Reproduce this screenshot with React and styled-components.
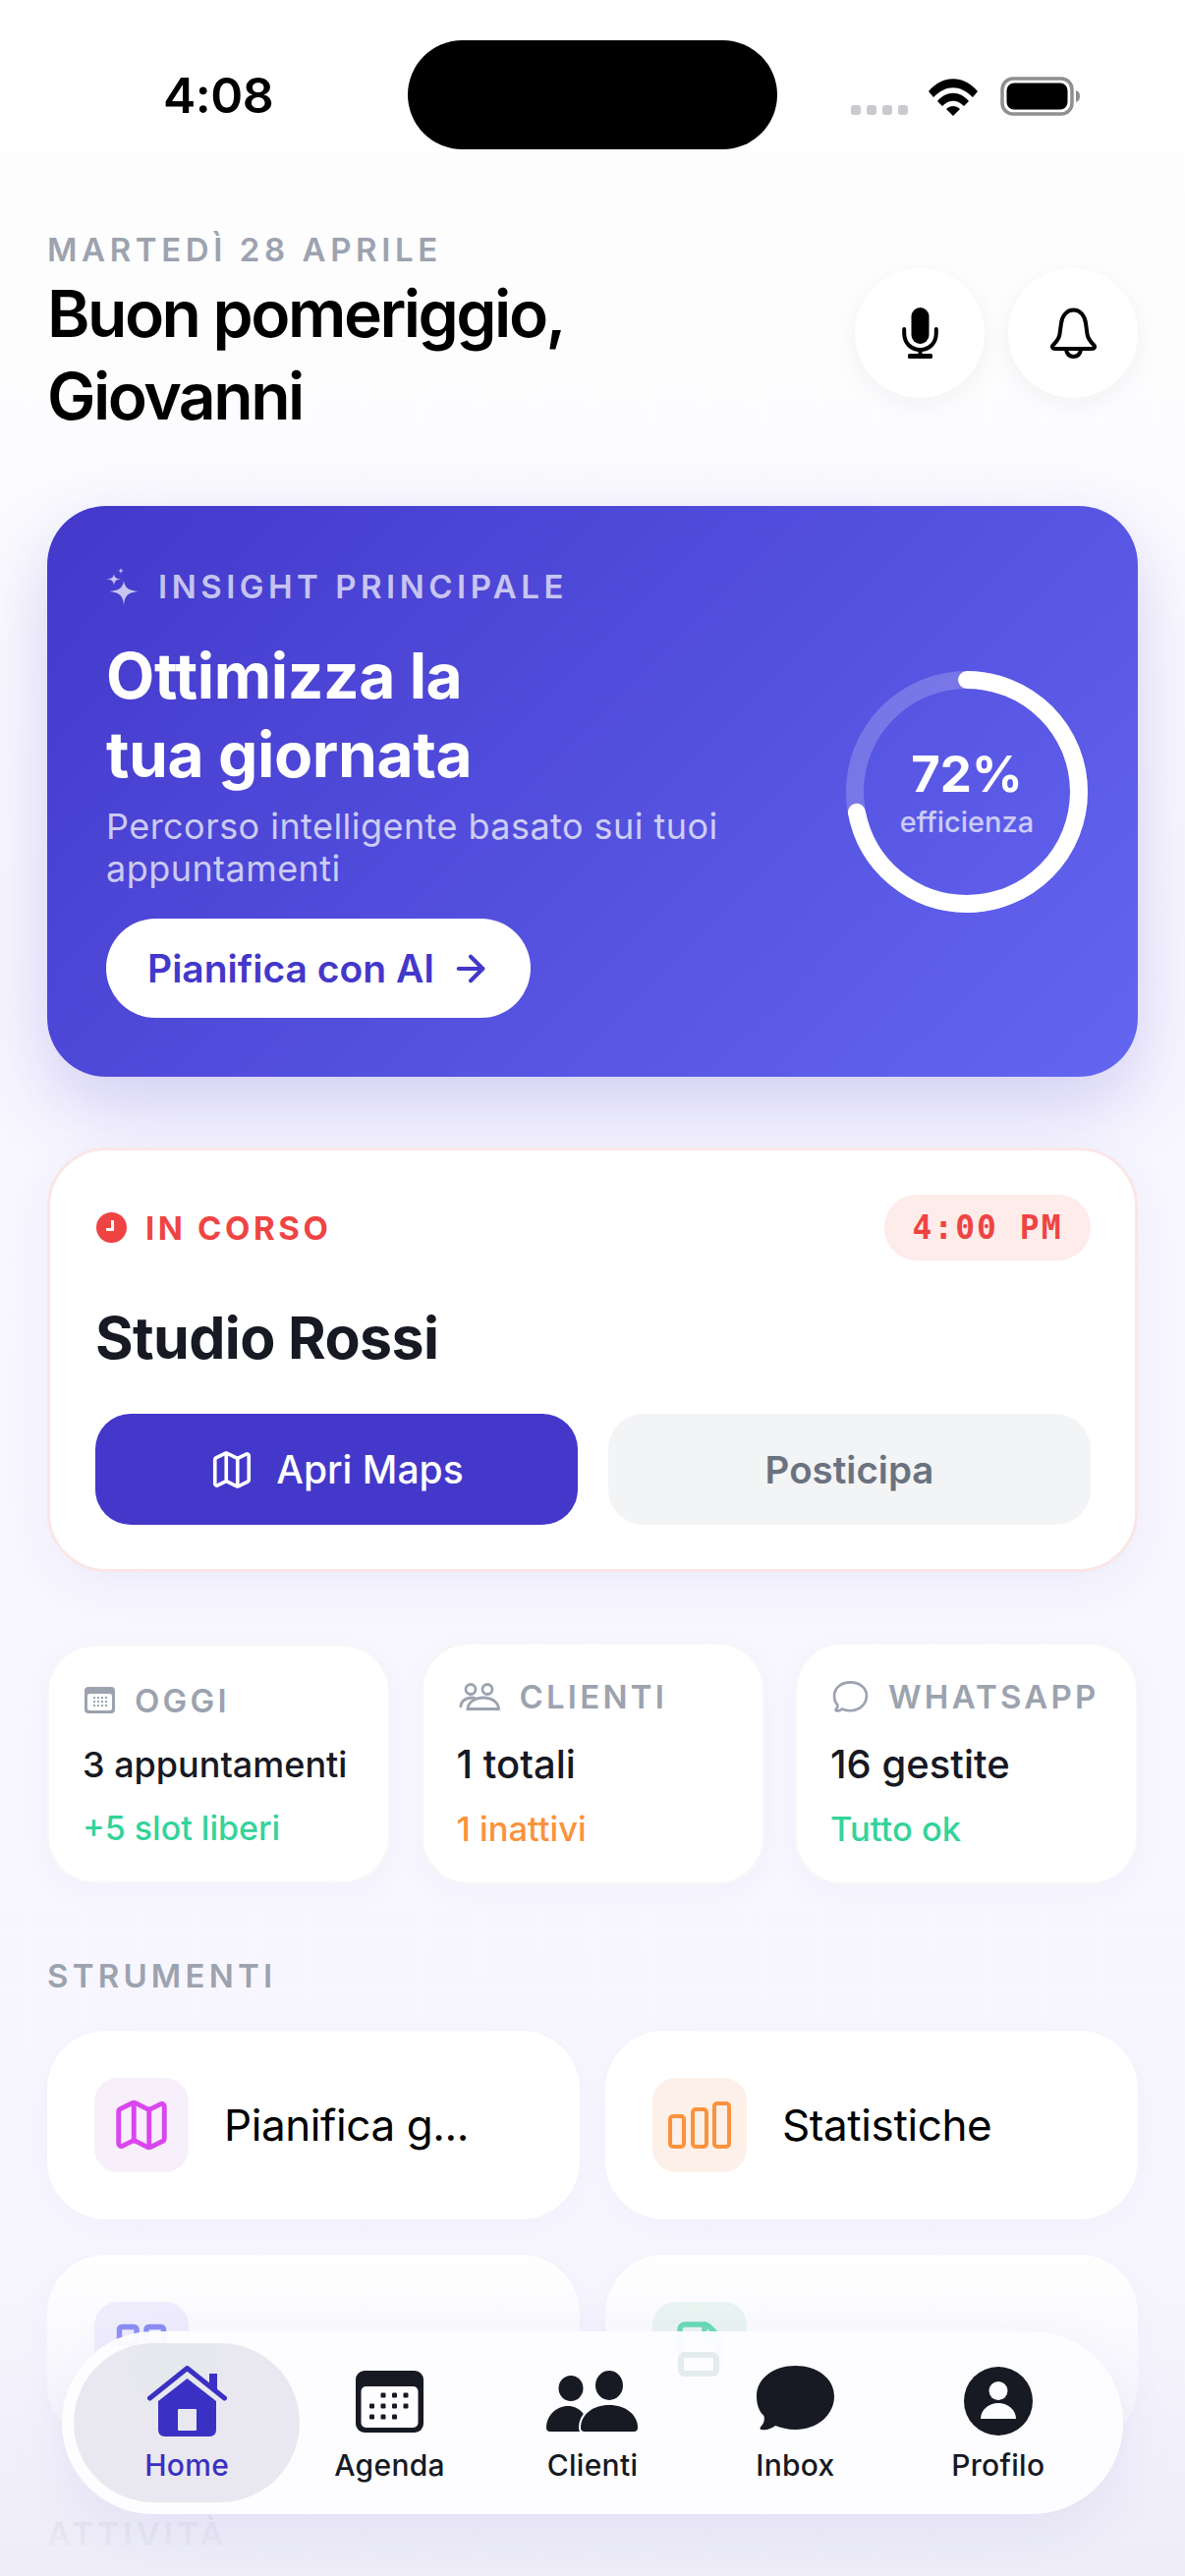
import styled, { createGlobalStyle } from "styled-components";
import { ArrowRight, LayoutGrid, Map, File as FileIcon } from "lucide-react";

const Global = createGlobalStyle`
  html, body { margin: 0; padding: 0; background: #fff; }
  * { box-sizing: border-box; }
  body { font-family: Inter, "Liberation Sans", sans-serif; }
`;

const Screen = styled.div`
  position: relative;
  width: 1206px;
  height: 2622px;
  overflow: hidden;
  background: linear-gradient(180deg, #ffffff 0, #fdfdfe 300px, #f8f7ff 1100px, #f7f6fe 2622px);
`;

const StatusBar = styled.div`
  display: flex;
  align-items: flex-start;
  height: 232px;
  padding: 41px 0 0 166px;
`;

const Clock = styled.div`
  width: 249px;
  margin-top: 28px;
  font-size: 50px;
  line-height: 56px;
  font-weight: 600;
  letter-spacing: -0.5px;
  color: #000;
`;

const Island = styled.div`
  width: 376px;
  height: 111px;
  border-radius: 56px;
  background: #000;
`;

const StatusIcons = styled.div`
  display: flex;
  align-items: flex-end;
  margin: 37px 0 0 75px;
`;

const SignalDots = styled.div`
  display: flex;
  gap: 6px;
  margin: 0 21px 0 0;
  padding-bottom: 1px;
`;

const Dot = styled.span`
  width: 10px;
  height: 10px;
  border-radius: 3px;
  background: #c9c9ce;
`;

const Content = styled.div`
  padding: 0 48px;
`;

const Header = styled.header`
  display: flex;
  justify-content: space-between;
  align-items: flex-start;
  height: 283px;
`;

const DateLine = styled.div`
  padding-top: 2px;
  font-size: 33px;
  line-height: 40px;
  font-weight: 600;
  letter-spacing: 4.6px;
  color: #9ca3af;
`;

const Greeting = styled.h1`
  margin: 3px 0 0;
  font-size: 66px;
  line-height: 84px;
  font-weight: 600;
  letter-spacing: -2.5px;
  color: #000;
`;

const HeaderActions = styled.div`
  display: flex;
  gap: 24px;
  margin-top: 41px;
`;

const RoundButton = styled.button`
  display: flex;
  align-items: center;
  justify-content: center;
  width: 132px;
  height: 132px;
  padding: 0;
  border: none;
  border-radius: 50%;
  background: #fff;
  color: #000;
  box-shadow: 0 6px 24px rgba(30, 30, 60, 0.05);
`;

const Hero = styled.section`
  display: flex;
  align-items: center;
  justify-content: space-between;
  height: 581px;
  padding: 60px 51px 60px 60px;
  border-radius: 60px;
  background: linear-gradient(135deg, #4338ca 0%, #6366f1 100%);
  box-shadow: 0 28px 80px rgba(67, 56, 202, 0.22);
`;

const HeroText = styled.div`
  display: flex;
  flex-direction: column;
  width: 700px;
`;

const HeroLabel = styled.div`
  display: flex;
  align-items: center;
  gap: 20px;
  height: 44px;
  font-size: 33px;
  font-weight: 600;
  letter-spacing: 4.5px;
  color: rgba(255, 255, 255, 0.7);
`;

const HeroTitle = styled.h2`
  margin: 29px 0 0;
  font-size: 64px;
  line-height: 80px;
  font-weight: 700;
  letter-spacing: -0.4px;
  color: #fff;
`;

const HeroSub = styled.p`
  margin: 12px 0 0;
  font-size: 36px;
  line-height: 43px;
  letter-spacing: 0.45px;
  color: rgba(255, 255, 255, 0.72);
`;

const PlanButton = styled.button`
  display: flex;
  align-items: center;
  gap: 16px;
  width: 432px;
  height: 101px;
  margin-top: 29px;
  padding: 0 0 0 42px;
  border: none;
  border-radius: 51px;
  background: #fff;
  font-family: inherit;
  font-size: 39px;
  font-weight: 600;
  color: #4338ca;
`;

const Ring = styled.div`
  display: grid;
  width: 246px;
  height: 246px;
  place-items: center;
  & > * { grid-area: 1 / 1; }
`;

const RingText = styled.div`
  display: flex;
  flex-direction: column;
  align-items: center;
`;

const RingValue = styled.div`
  font-size: 51px;
  line-height: 60px;
  font-weight: 700;
  color: #fff;
`;

const RingCaption = styled.div`
  margin-top: 2px;
  font-size: 29px;
  line-height: 34px;
  font-weight: 500;
  color: rgba(255, 255, 255, 0.7);
`;

const NowCard = styled.section`
  margin-top: 72px;
  height: 432px;
  padding: 45px 45px 0 46px;
  border: 3px solid #fbe6e6;
  border-radius: 60px;
  background: #fff;
  box-shadow: 0 12px 48px rgba(67, 56, 202, 0.06);
`;

const NowTop = styled.div`
  display: flex;
  align-items: center;
  justify-content: space-between;
`;

const NowBadge = styled.div`
  display: flex;
  align-items: center;
  gap: 19px;
  padding-left: 1px;
  font-size: 33px;
  font-weight: 700;
  letter-spacing: 3.6px;
  color: #ef4444;
`;

const TimePill = styled.div`
  display: flex;
  align-items: center;
  justify-content: center;
  width: 210px;
  height: 67px;
  border-radius: 33px;
  background: #fdecea;
  font-family: "DejaVu Sans Mono", monospace;
  font-size: 33px;
  font-weight: 700;
  letter-spacing: 2px;
  color: #ef4444;
`;

const PlaceName = styled.h3`
  margin: 44px 0 0;
  font-size: 59px;
  line-height: 70px;
  font-weight: 700;
  letter-spacing: -0.6px;
  color: #171923;
`;

const NowActions = styled.div`
  display: grid;
  grid-template-columns: 1fr 1fr;
  gap: 31px;
  margin-top: 42px;
`;

const ActionButton = styled.button`
  display: flex;
  align-items: center;
  justify-content: center;
  gap: 22px;
  height: 113px;
  border: none;
  border-radius: 36px;
  font-family: inherit;
  font-size: ${(p) => (p.$primary ? 39 : 38.5)}px;
  font-weight: ${(p) => (p.$primary ? 500 : 600)};
  background: ${(p) => (p.$primary ? "#4338ca" : "#f3f4f6")};
  color: ${(p) => (p.$primary ? "#fff" : "#6b7280")};
`;

const StatGrid = styled.div`
  display: grid;
  grid-template-columns: repeat(3, 1fr);
  align-items: center;
  gap: 31.5px;
  margin-top: 72px;
`;

const StatCard = styled.div`
  display: flex;
  flex-direction: column;
  padding: ${(p) => (p.$compact ? 34 : 32)}px 0 0 34px;
  height: ${(p) => (p.$compact ? 243 : 246)}px;
  border: 2px solid rgba(30, 30, 60, 0.035);
  border-radius: 48px;
  background: #fff;
  box-shadow: 0 8px 30px rgba(67, 56, 202, 0.03);
`;

const StatLabel = styled.div`
  display: flex;
  align-items: center;
  gap: 20px;
  height: 42px;
  padding-left: 2px;
  font-size: 33px;
  font-weight: 600;
  letter-spacing: 3.2px;
  color: #9ca3af;
`;

const StatValue = styled.div`
  margin-top: ${(p) => (p.$compact ? 19 : 23)}px;
  font-size: ${(p) => (p.$compact ? 36 : 40)}px;
  line-height: 50px;
  font-weight: 500;
  color: #171923;
`;

const StatNote = styled.div`
  margin-top: ${(p) => (p.$compact ? 19 : 20)}px;
  font-size: ${(p) => (p.$compact ? 34 : 34.5)}px;
  line-height: 42px;
  font-weight: 500;
  color: ${(p) => p.$color};
`;

const SectionTitle = styled.div`
  margin: ${(p) => p.$top}px 0 0;
  height: 40px;
  font-size: 33px;
  line-height: 40px;
  font-weight: 600;
  letter-spacing: 4.2px;
  color: #9ca3af;
`;

const ToolGrid = styled.div`
  display: grid;
  grid-template-columns: 1fr 1fr;
  gap: 36px 26px;
  margin-top: 36px;
`;

const ToolCard = styled.div`
  display: flex;
  align-items: center;
  gap: 36px;
  height: 192px;
  padding: 0 48px;
  border-radius: 60px;
  background: #fff;
  box-shadow: 0 8px 30px rgba(67, 56, 202, 0.035);
`;

const ToolTile = styled.div`
  display: flex;
  flex: none;
  align-items: center;
  justify-content: center;
  width: 96px;
  height: 96px;
  border-radius: 24px;
  background: ${(p) => p.$bg};
  color: ${(p) => p.$fg};
`;

const ToolName = styled.div`
  min-width: 0;
  font-size: 44px;
  line-height: 60px;
  font-weight: 400;
  letter-spacing: -0.4px;
  color: #000;
`;

const BottomFade = styled.div`
  position: absolute;
  left: 0;
  right: 0;
  bottom: 0;
  height: 340px;
  background: linear-gradient(180deg, rgba(240, 239, 250, 0) 0%, rgba(240, 239, 250, 0.45) 40%, rgba(238, 237, 248, 0.86) 80%, #eeedf8 100%);
`;

const Nav = styled.nav`
  position: absolute;
  left: 63px;
  top: 2373px;
  display: grid;
  grid-template-columns: repeat(5, 1fr);
  width: 1080px;
  height: 186px;
  padding: 12px 24px;
  border-radius: 93px;
  background: rgba(253, 253, 255, 0.96);
  box-shadow: 0 18px 60px rgba(67, 56, 202, 0.07);
`;

const NavItem = styled.div`
  position: relative;
  display: flex;
  flex-direction: column;
  align-items: center;
  justify-content: flex-end;
  padding-bottom: 20px;
  margin: ${(p) => (p.$active ? "0 -12px" : "0")};
  border-radius: 81px;
  background: ${(p) => (p.$active ? "radial-gradient(circle at 45% 15%, #e3e9ec 0, #e9e8f0 30%)" : "none")};
  color: ${(p) => (p.$active ? "#3b30c4" : "#171923")};
`;

const NavIcon = styled.div`
  display: flex;
  align-items: center;
  height: 72px;
`;

const NavLabel = styled.div`
  margin-top: 11px;
  font-size: 30px;
  line-height: 36px;
  font-weight: 500;
  letter-spacing: 0.3px;
`;

const GhostIcon = styled.div`
  position: absolute;
  left: 627px;
  top: 21px;
  width: 42px;
  height: 25px;
  border: 6px solid #e4ecec;
  border-radius: 7px;
`;

const Signal = () => (
  <SignalDots>
    <Dot />
    <Dot />
    <Dot />
    <Dot />
  </SignalDots>
);

const Wifi = () => (
  <svg width="50" height="38" viewBox="0 0 50 38" style={{ marginRight: 23 }}>
    <path d="M0 13 C14 -4 36 -4 50 13 L45 19 C32 6 18 6 5 19 Z" fill="#000" />
    <path d="M9 23 C18 12 32 12 41 23 L36 28 C29 21 21 21 14 28 Z" fill="#000" />
    <path d="M18 31 C22 27 28 27 32 31 L25 38 Z" fill="#000" />
  </svg>
);

const Battery = () => (
  <svg width="83" height="40" viewBox="0 0 83 40">
    <rect x="2" y="2" width="71" height="36" rx="11" fill="none" stroke="#8e8e93" strokeWidth="3.5" />
    <rect x="6.5" y="6.5" width="62" height="27" rx="7.5" fill="#000" />
    <path d="M77 14 C80 15 81 17 81 20 C81 23 80 25 77 26 Z" fill="#8e8e93" />
  </svg>
);

const MicIcon = () => (
  <svg width="37" height="52" viewBox="0 0 37 52">
    <rect x="9.5" y="0" width="18" height="37" rx="9" fill="#000" />
    <path d="M2.2 22 V26 C2.2 36 9 43 18.5 43 C28 43 34.8 36 34.8 26 V22" fill="none" stroke="#000" strokeWidth="4" strokeLinecap="round" />
    <rect x="16.5" y="42" width="4" height="7" fill="#000" />
    <rect x="6" y="47" width="25" height="5" rx="1.5" fill="#000" />
  </svg>
);

const BellIcon = () => (
  <svg width="49" height="52" viewBox="0 0 49 52" fill="none" stroke="#000" strokeWidth="4" strokeLinejoin="round">
    <path d="M24.5 2.5 C31 2.5 36 8 37 16 L38.5 27 C39 32 42 35 45 38 C47 40 46 42 43 42 H6 C3 42 2 40 4 38 C7 35 10 32 10.5 27 L12 16 C13 8 18 2.5 24.5 2.5 Z" />
    <path d="M17 43 C18 48 21 50 24.5 50 C28 50 31 48 32 43" />
  </svg>
);

const Sparkle = () => (
  <svg width="33" height="38" viewBox="0 0 33 38" fill="rgba(255,255,255,0.7)">
    <path d="M18 13 C19 20 22 23 33 24 C22 25 19 28 18 38 C17 28 14 25 3 24 C14 23 17 20 18 13 Z" />
    <path d="M8 6 C8.5 10 10 11 15 11.5 C10 12 8.5 13.5 8 18 C7.5 13.5 6 12 0 11.5 C6 11 7.5 10 8 6 Z" />
    <path d="M15 0 C15.3 2 16 2.7 18 3 C16 3.3 15.3 4 15 6 C14.7 4 14 3.3 12 3 C14 2.7 14.7 2 15 0 Z" />
  </svg>
);

const ClockBadge = () => (
  <svg width="31" height="31" viewBox="0 0 31 31">
    <circle cx="15.5" cy="15.5" r="15.5" fill="#ef4444" />
    <path d="M16.5 8 V17.5 H10" fill="none" stroke="#fff" strokeWidth="3" />
  </svg>
);

const SmallCalendar = () => (
  <svg width="31" height="27" viewBox="0 0 31 27">
    <rect width="31" height="27" rx="4" fill="#9ca3af" />
    <rect x="3" y="7" width="25" height="17" rx="2.5" fill="#fff" />
    {[9, 13, 17, 21].map((x) => [11, 15, 19].map((y) => <rect key={`${x}-${y}`} x={x} y={y - 1} width="2" height="2" fill="#9ca3af" />))}
  </svg>
);

const OutlineUsers = () => (
  <svg width="42" height="28" viewBox="0 0 42 28" fill="none" stroke="#9ca3af" strokeWidth="2.8">
    <circle cx="12" cy="6.5" r="5" />
    <circle cx="29" cy="6.5" r="5" />
    <path d="M2 25 C1 20 6 15 13 15 C14 15 16 15.5 17 16" />
    <path d="M9 26.5 H40.5 C40.5 20 34 15 25 15 C16 15 9 20 9 26.5 Z" />
  </svg>
);

const bubblePath =
  "M37 0 C58 0 74 13 74 31 C74 50 58 65 37 65 C30 65 23 63 18 61 C14 64 9 66 5 65 C3 65 3 63 4 62 C7 59 8 55 7 51 C2 46 0 39 0 31 C0 13 16 0 37 0 Z";

const OutlineBubble = () => (
  <svg width="37" height="32" viewBox="-3 -3 80 72" fill="none" stroke="#9ca3af" strokeWidth="6">
    <path d={bubblePath} />
  </svg>
);

const Bars = () => (
  <svg width="64" height="48" viewBox="0 0 64 48" fill="none" stroke="currentColor" strokeWidth="4">
    <rect x="2" y="15" width="14" height="31" rx="3" />
    <rect x="25" y="8" width="14" height="38" rx="3" />
    <rect x="47" y="2" width="15" height="44" rx="3" />
  </svg>
);

const HomeIcon = () => (
  <svg width="81" height="72" viewBox="0 0 81 72">
    <path d="M63 8 H71 V27 L63 21 Z" fill="#3b30c4" />
    <path d="M2.5 33 L40.5 2.5 L78.5 33" fill="none" stroke="#3b30c4" strokeWidth="5" strokeLinecap="round" strokeLinejoin="round" />
    <path d="M40.5 13 L70 36 V65 Q70 72 63 72 H18 Q11 72 11 65 V36 Z" fill="#3b30c4" />
    <rect x="31" y="44" width="19" height="22" rx="1" fill="#e9e8f0" />
  </svg>
);

const CalendarIcon = () => {
  const dots = [[28, 25], [39.5, 25], [51, 25], [16.5, 36], [28, 36], [39.5, 36], [51, 36], [16.5, 47], [28, 47], [39.5, 47]];
  return (
    <svg width="69" height="63" viewBox="0 0 69 63">
      <rect width="69" height="63" rx="9" fill="#171923" />
      <rect x="5.5" y="16" width="58" height="42" rx="5" fill="#fdfdff" />
      {dots.map(([x, y]) => <rect key={`${x}-${y}`} x={x - 2.5} y={y - 2.5} width="5" height="5" rx="1.2" fill="#171923" />)}
    </svg>
  );
};

const PeopleIcon = () => (
  <svg width="93" height="62" viewBox="0 0 93 62" fill="#171923">
    <ellipse cx="25" cy="18" rx="12.5" ry="13" />
    <ellipse cx="64" cy="15" rx="14" ry="15" />
    <path d="M0 58 C0 46 10 36 22 36 C34 36 42 46 42 58 Q42 62 38 62 H4 Q0 62 0 58 Z" />
    <path d="M35 58 C35 45 47 35 64 35 C81 35 93 45 93 58 Q93 62 89 62 H39 Q35 62 35 58 Z" stroke="#fdfdff" strokeWidth="4" paintOrder="stroke" />
  </svg>
);

const BubbleIcon = () => (
  <svg width="79" height="72" viewBox="0 0 74 72" preserveAspectRatio="none">
    <path d={bubblePath} fill="#171923" />
  </svg>
);

const ProfileIcon = () => (
  <svg width="70" height="70" viewBox="0 0 70 70">
    <circle cx="35" cy="35" r="35" fill="#171923" />
    <circle cx="35" cy="24.5" r="9.5" fill="#fdfdff" />
    <path d="M17 53 C17 44 25 37 35 37 C45 37 53 44 53 53 Z" fill="#fdfdff" />
  </svg>
);

const stats = [
  { label: "OGGI", icon: <SmallCalendar />, value: "3 appuntamenti", note: "+5 slot liberi", color: "#34d399", compact: true },
  { label: "CLIENTI", icon: <OutlineUsers />, value: "1 totali", note: "1 inattivi", color: "#fb923c" },
  { label: "WHATSAPP", icon: <OutlineBubble />, value: "16 gestite", note: "Tutto ok", color: "#34d399" },
];

const navItems = [
  { label: "Home", icon: <HomeIcon />, active: true },
  { label: "Agenda", icon: <CalendarIcon /> },
  { label: "Clienti", icon: <PeopleIcon /> },
  { label: "Inbox", icon: <BubbleIcon /> },
  { label: "Profilo", icon: <ProfileIcon /> },
];

export default function App() {
  return (
    <Screen>
      <Global />
      <StatusBar>
        <Clock>4:08</Clock>
        <Island />
        <StatusIcons>
          <Signal />
          <Wifi />
          <Battery />
        </StatusIcons>
      </StatusBar>
      <Content>
        <Header>
          <div>
            <DateLine>MARTEDÌ 28 APRILE</DateLine>
            <Greeting>
              Buon pomeriggio,
              <br />
              Giovanni
            </Greeting>
          </div>
          <HeaderActions>
            <RoundButton>
              <MicIcon />
            </RoundButton>
            <RoundButton>
              <BellIcon />
            </RoundButton>
          </HeaderActions>
        </Header>

        <Hero>
          <HeroText>
            <HeroLabel>
              <Sparkle />
              INSIGHT PRINCIPALE
            </HeroLabel>
            <HeroTitle>
              Ottimizza la
              <br />
              tua giornata
            </HeroTitle>
            <HeroSub>Percorso intelligente basato sui tuoi appuntamenti</HeroSub>
            <PlanButton>
              Pianifica con AI
              <ArrowRight size={42} strokeWidth={2.4} />
            </PlanButton>
          </HeroText>
          <Ring>
            <svg width="246" height="246" viewBox="0 0 246 246">
              <circle cx="123" cy="123" r="114" fill="none" stroke="rgba(255,255,255,0.2)" strokeWidth="18" />
              <circle
                cx="123"
                cy="123"
                r="114"
                fill="none"
                stroke="#fff"
                strokeWidth="18"
                strokeLinecap="round"
                strokeDasharray={`${2 * Math.PI * 114 * 0.72} ${2 * Math.PI * 114}`}
                transform="rotate(-90 123 123)"
              />
            </svg>
            <RingText>
              <RingValue>72%</RingValue>
              <RingCaption>efficienza</RingCaption>
            </RingText>
          </Ring>
        </Hero>

        <NowCard>
          <NowTop>
            <NowBadge>
              <ClockBadge />
              IN CORSO
            </NowBadge>
            <TimePill>4:00 PM</TimePill>
          </NowTop>
          <PlaceName>Studio Rossi</PlaceName>
          <NowActions>
            <ActionButton $primary>
              <Map size={46} strokeWidth={1.9} />
              Apri Maps
            </ActionButton>
            <ActionButton>Posticipa</ActionButton>
          </NowActions>
        </NowCard>

        <StatGrid>
          {stats.map((s) => (
            <StatCard key={s.label} $compact={s.compact}>
              <StatLabel>
                {s.icon}
                {s.label}
              </StatLabel>
              <StatValue $compact={s.compact}>{s.value}</StatValue>
              <StatNote $compact={s.compact} $color={s.color}>{s.note}</StatNote>
            </StatCard>
          ))}
        </StatGrid>

        <SectionTitle $top={73}>STRUMENTI</SectionTitle>
        <ToolGrid>
          <ToolCard>
            <ToolTile $bg="#f7f0fa" $fg="#d946ef">
              <Map size={62} strokeWidth={1.9} />
            </ToolTile>
            <ToolName>Pianifica g...</ToolName>
          </ToolCard>
          <ToolCard>
            <ToolTile $bg="#fdf0e9" $fg="#fb923c">
              <Bars />
            </ToolTile>
            <ToolName>Statistiche</ToolName>
          </ToolCard>
          <ToolCard>
            <ToolTile $bg="#eeecfd" $fg="#6366f1">
              <LayoutGrid size={60} strokeWidth={2.2} />
            </ToolTile>
          </ToolCard>
          <ToolCard>
            <ToolTile $bg="#e6f6ef" $fg="#34d399">
              <FileIcon size={60} strokeWidth={2.2} />
            </ToolTile>
          </ToolCard>
        </ToolGrid>
        <SectionTitle $top={72}>ATTIVITÀ</SectionTitle>
      </Content>

      <BottomFade />
      <Nav>
        <GhostIcon />
        {navItems.map((item) => (
          <NavItem key={item.label} $active={item.active}>
            <NavIcon>{item.icon}</NavIcon>
            <NavLabel>{item.label}</NavLabel>
          </NavItem>
        ))}
      </Nav>
    </Screen>
  );
}
